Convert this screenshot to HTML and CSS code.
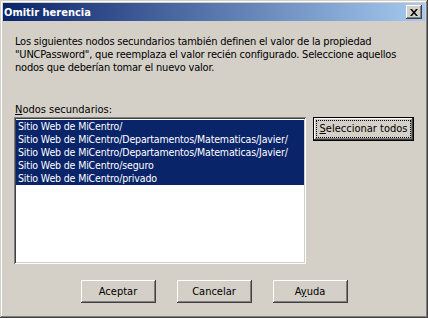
FILE: index.html
```html
<!DOCTYPE html>
<html lang="es">
<head>
    <meta charset="utf-8" />
    <title>Omitir herencia</title>
    <link rel="stylesheet" href="styles.css">
</head>
<body>
    <div class="dialog">
        <div class="titlebar">
            <span class="title">Omitir herencia</span>
            <button class="close-btn" aria-label="Cerrar">
                <svg width="8" height="7" viewBox="0 0 8 7">
                    <path d="M0 0h2l2 2.5L6 0h2L5 3.5 8 7H6L4 4.5 2 7H0l3-3.5z" fill="#000"/>
                </svg>
            </button>
        </div>

        <div class="body">
            <p class="intro">
                Los siguientes nodos secundarios también definen el valor de la propiedad
                "UNCPassword", que reemplaza el valor recién configurado. Seleccione aquellos
                nodos que deberían tomar el nuevo valor.
            </p>

            <div class="label"><u>N</u>odos secundarios:</div>

            <div class="list-row">
                <ul class="listbox">
                    <li class="selected">Sitio Web de MiCentro/</li>
                    <li class="selected">Sitio Web de MiCentro/Departamentos/Matematicas/Javier/</li>
                    <li class="selected">Sitio Web de MiCentro/Departamentos/Matematicas/Javier/</li>
                    <li class="selected">Sitio Web de MiCentro/seguro</li>
                    <li class="selected">Sitio Web de MiCentro/privado</li>
                </ul>
                <button class="button default"><span class="focus"><u>S</u>eleccionar todos</span></button>
            </div>

            <div class="actions">
                <button class="button">Aceptar</button>
                <button class="button">Cancelar</button>
                <button class="button">A<u>y</u>uda</button>
            </div>
        </div>
    </div>
</body>
</html>
```

FILE: styles.css
```css
html, body {
    margin: 0;
    padding: 0;
    background: #D4D0C8;
}
body {
    font-family: "DejaVu Sans Condensed", "Liberation Sans", sans-serif;
    font-size: 11px;
    color: #000;
}
.dialog {
    width: 428px;
    height: 318px;
    box-sizing: border-box;
    padding: 3px;
    background: #D4D0C8;
    box-shadow: inset -1px -1px #404040, inset 1px 1px #D4D0C8,
                inset -2px -2px #808080, inset 2px 2px #FFFFFF;
    display: flex;
    flex-direction: column;
}
.titlebar {
    height: 18px;
    background: linear-gradient(to right, #0A246A, #A6CAF0);
    display: flex;
    align-items: center;
    justify-content: space-between;
    padding: 0 3px 0 1px;
}
.title {
    color: #fff;
    font-weight: bold;
    font-size: 11px;
}
.close-btn {
    width: 16px;
    height: 14px;
    padding: 0;
    border: none;
    background: #D4D0C8;
    box-shadow: inset -1px -1px #404040, inset 1px 1px #FFFFFF,
                inset -2px -2px #808080, inset 2px 2px #D4D0C8;
    display: flex;
    align-items: center;
    justify-content: center;
}
.body {
    flex: 1;
    padding: 14px 11px 0 11px;
    display: flex;
    flex-direction: column;
}
.intro {
    margin: 0 0 0 1px;
    line-height: 13px;
    width: 385px;
    letter-spacing: -0.2px;
}
.label {
    margin: 29px 0 0 1px;
    line-height: 13px;
}
.list-row {
    display: flex;
    gap: 7px;
    margin-top: 1px;
}
.listbox {
    list-style: none;
    margin: 0;
    width: 292px;
    height: 147px;
    box-sizing: border-box;
    padding: 3px 2px;
    background: #fff;
    box-shadow: inset 1px 1px #808080, inset -1px -1px #FFFFFF,
                inset 2px 2px #404040, inset -2px -2px #D4D0C8;
    overflow: hidden;
}
.listbox li {
    line-height: 13px;
    padding-left: 2px;
    font-size: 10.5px;
    letter-spacing: -0.15px;
    white-space: nowrap;
    overflow: hidden;
}
.listbox li.selected {
    background: #0A246A;
    color: #fff;
}
.button {
    width: 75px;
    height: 23px;
    padding: 0;
    border: none;
    background: #D4D0C8;
    font: inherit;
    color: #000;
    box-shadow: inset -1px -1px #404040, inset 1px 1px #FFFFFF,
                inset -2px -2px #808080, inset 2px 2px #D4D0C8;
}
.button.default {
    width: 101px;
    height: 24px;
    border: 1px solid #000;
    padding: 3px;
}
.focus {
    display: block;
    height: 100%;
    box-sizing: border-box;
    outline: 1px dotted #000;
    line-height: 16px;
}
.actions {
    margin-top: 16px;
    display: flex;
    justify-content: center;
    gap: 21px;
}
```
